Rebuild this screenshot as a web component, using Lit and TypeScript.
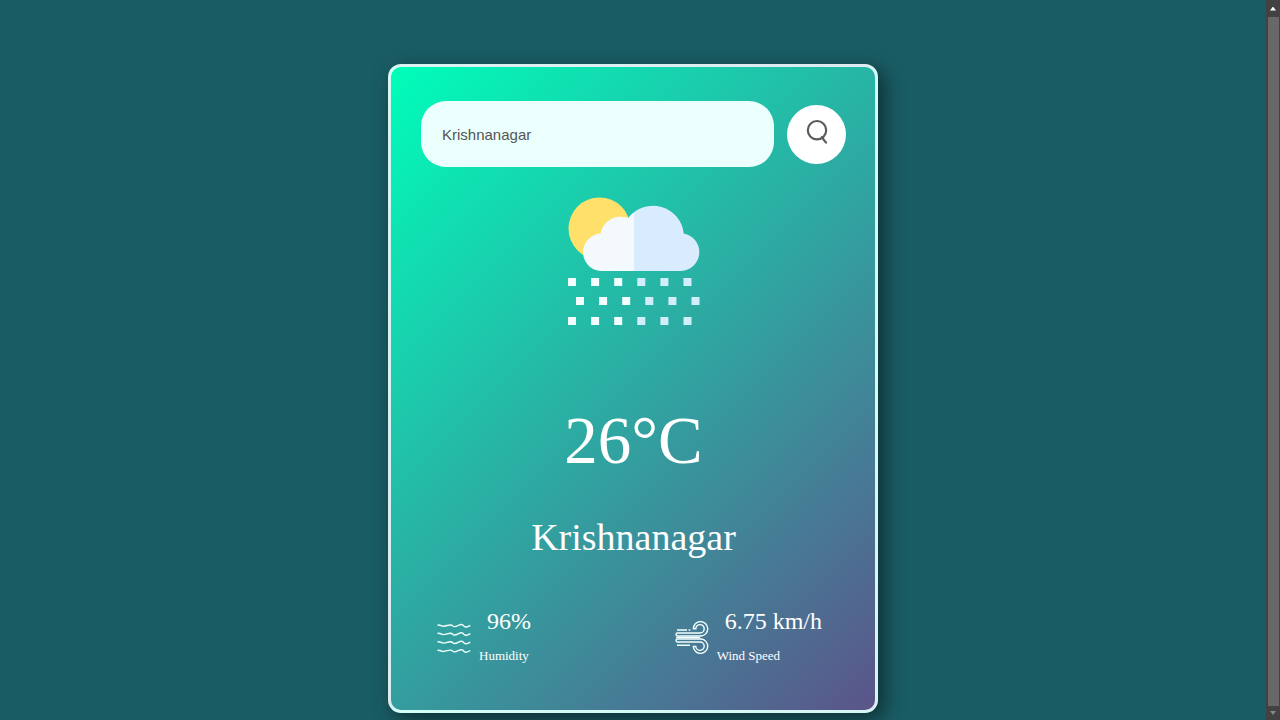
import { LitElement, html, css, svg } from "lit";
import { customElement, property, state } from "lit/decorators.js";

const searchIcon = html`<svg class="glass" viewBox="0 0 26 28" aria-hidden="true">
  <circle cx="13" cy="12.2" r="9.2"></circle>
  <path d="M17.8 19.2 22 24.6"></path>
</svg>`;

const humidityIcon = html`<svg class="icon" viewBox="0 0 34 34" aria-hidden="true">
  ${[4, 12.3, 20.8, 29.2].map(
    (y) => svg`<path d="M0.5 ${y} q2.8 0 4.2 0.9 t5.5 -0.4 t5.5 0.4 t5.5 -0.4 t5.5 0.4 t6.6 -0.6"></path>`,
  )}
</svg>`;

const windIcon = html`<svg class="icon" viewBox="0 0 34 34" aria-hidden="true">
  <path d="M2 9H12M13.6 9H15.4M2 24.2H15"></path>
  <path d="M2.5 12H25a4.2 4.2 0 1 0-4.2-4.2h-2.5A7.2 7.2 0 1 1 26 15H2.5a1.5 1.5 0 0 1 0-3Z"></path>
  <path d="M2.5 18H26a7.2 7.2 0 1 1-7.7 7.5h2.5A4.2 4.2 0 1 0 25 21H2.5a1.5 1.5 0 0 1 0-3Z"></path>
  <path d="M1 16.5H25"></path>
</svg>`;

const rows = [
  { y: 81, x: 0 },
  { y: 100, x: 8 },
  { y: 120, x: 0 },
];

const weatherIcon = html`<svg class="weather" viewBox="0 0 132 132" role="img" aria-label="Drizzle">
  <circle cx="31.5" cy="31.5" r="31" fill="#ffe06a"></circle>
  <path fill="#f4f9fe" d="M66 74H35a18.7 18.7 0 0 1-2.5-37.4A20.5 20.5 0 0 1 60 21l6 4Z"></path>
  <path fill="#d9ecfe" d="M66 74h47a18.9 18.9 0 0 0 2.7-37.5A31 31 0 0 0 60.5 20.5L66 25Z"></path>
  <path fill="#f4f9fe" d="M60.5 20.7 66 15.5v58.5H60Z"></path>
  ${rows.map((r) =>
    [0, 1, 2, 3, 4, 5].map(
      (i) => svg`<rect x=${r.x + i * 23.1} y=${r.y} width="8" height="8" fill=${i < 3 ? "#f4fdff" : "#d3eefb"}></rect>`,
    ),
  )}
</svg>`;

@customElement("weather-stat")
export class WeatherStat extends LitElement {
  @property() value = "";
  @property() label = "";

  static styles = css`
    :host { display: flex; align-items: center; gap: 8px; color: #fff; }
    .value { margin: 0 0 0 8px; font-size: 24px; line-height: 28px; }
    .label { margin: 13px 0 0; font-size: 13px; line-height: 16px; }
    .text { padding-bottom: 4px; white-space: nowrap; }
  `;

  render() {
    return html`<slot></slot>
      <div class="text">
        <p class="value">${this.value}</p>
        <p class="label">${this.label}</p>
      </div>`;
  }
}

@customElement("app-root")
export class AppRoot extends LitElement {
  @state() private city = "Krishnanagar";
  @state() private query = "Krishnanagar";

  static styles = css`
    :host {
      display: grid;
      grid-template-columns: 1fr 14px;
      height: 100vh;
      overflow: hidden;
      background: #1a5c64;
      font-family: "Liberation Serif", "Times New Roman", serif;
    }
    .page { padding: 64px 16px 0; overflow: hidden; }
    .card {
      box-sizing: border-box;
      max-width: 490px;
      margin: 0 auto;
      padding: 34px 29px 42px 30px;
      border: 3px solid rgba(240, 255, 255, 0.88);
      border-radius: 13px;
      background: linear-gradient(135deg, #00feba, #5b548a);
      box-shadow: 6px 6px 20px rgba(0, 0, 0, 0.5);
      color: #fff;
      text-align: center;
    }
    .search { display: flex; align-items: center; gap: 13px; }
    .field {
      flex: 1;
      min-width: 0;
      box-sizing: border-box;
      height: 66px;
      padding: 0 21px;
      border: 0;
      outline: 0;
      border-radius: 25px;
      background: #ebfffc;
      color: #555;
      font: 15px "Liberation Sans", Arial, sans-serif;
    }
    .go {
      display: grid;
      place-items: center;
      width: 59px;
      height: 59px;
      padding: 0 0 4px;
      border: 0;
      border-radius: 50%;
      background: #fff;
      cursor: pointer;
    }
    .glass { width: 26px; height: 28px; fill: none; stroke: #5b5b5b; stroke-width: 2.2; stroke-linecap: round; }
    .weather { display: block; width: 132px; height: 132px; margin: 30px auto 0; }
    .temp { margin: 73px 0 0; font-size: 67px; line-height: 76px; font-weight: 400; }
    .city { margin: 37px 0 0; font-size: 38px; line-height: 44px; font-weight: 400; }
    .details { display: flex; justify-content: space-between; margin-top: 48px; padding: 0 24px 0 16px; text-align: left; }
    .icon { width: 34px; height: 34px; fill: none; stroke: #f2ffff; stroke-width: 1.4; }
    .scroll { display: grid; grid-template-rows: 17px 1fr 14px; background: #424242; }
    .thumb { margin: 0 1px 0 2px; background: #686868; }
    .arrow { place-self: center; width: 6px; height: 4px; background: #fff; clip-path: polygon(50% 0, 100% 100%, 0 100%); }
    .down { background: #888; clip-path: polygon(0 0, 100% 0, 50% 100%); }
  `;

  private submit(e: Event) {
    e.preventDefault();
    this.city = this.query;
  }

  render() {
    return html`
      <main class="page">
        <section class="card">
          <form class="search" @submit=${this.submit}>
            <input
              class="field"
              type="text"
              aria-label="City name"
              spellcheck="false"
              .value=${this.query}
              @input=${(e: Event) => (this.query = (e.target as HTMLInputElement).value)}
            />
            <button class="go" type="submit" aria-label="Search">${searchIcon}</button>
          </form>
          ${weatherIcon}
          <h1 class="temp">26°C</h1>
          <h2 class="city">${this.city}</h2>
          <div class="details">
            <weather-stat value="96%" label="Humidity">${humidityIcon}</weather-stat>
            <weather-stat value="6.75 km/h" label="Wind Speed">${windIcon}</weather-stat>
          </div>
        </section>
      </main>
      <div class="scroll" aria-hidden="true">
        <span class="arrow"></span>
        <span class="thumb"></span>
        <span class="arrow down"></span>
      </div>
    `;
  }
}
